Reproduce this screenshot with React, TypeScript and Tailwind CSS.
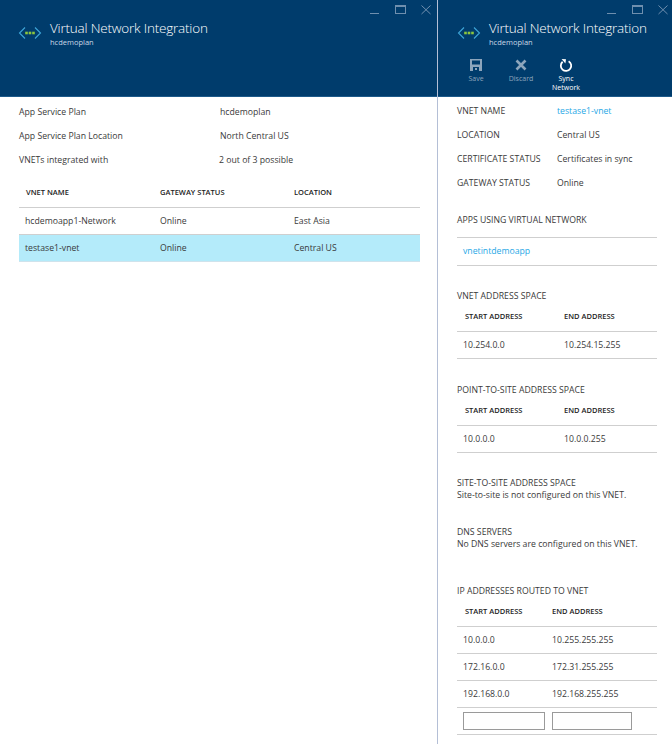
import React from 'react';

function VnetIcon() {
  return (
    <svg width="24" height="14" viewBox="0 0 24 14" className="shrink-0">
      <path d="M7 1.5 L1.5 7 L7 12.5" fill="none" stroke="#3ea5d8" strokeWidth="1.1" />
      <path d="M17 1.5 L22.5 7 L17 12.5" fill="none" stroke="#3ea5d8" strokeWidth="1.1" />
      <rect x="7.2" y="5.7" width="2.6" height="2.6" fill="#8cc63f" />
      <rect x="10.7" y="5.7" width="2.6" height="2.6" fill="#8cc63f" />
      <rect x="14.2" y="5.7" width="2.6" height="2.6" fill="#8cc63f" />
    </svg>
  );
}

function SaveIcon() {
  return (
    <svg width="14" height="14" viewBox="0 0 14 14">
      <path
        fillRule="evenodd"
        d="M1 1 H13 V13 H1 Z M3 2.5 V6.5 H11 V2.5 Z M4 9 V13 H10 V9 Z"
        fill="#8ca5bc"
      />
      <rect x="6" y="10" width="2" height="2" fill="#8ca5bc" />
    </svg>
  );
}

function DiscardIcon() {
  return (
    <svg width="14" height="14" viewBox="0 0 14 14">
      <path d="M2.5 2.5 L11.5 11.5 M11.5 2.5 L2.5 11.5" stroke="#8ca5bc" strokeWidth="2.6" fill="none" />
    </svg>
  );
}

function SyncIcon() {
  return (
    <svg width="14" height="15" viewBox="0 0 14 15">
      <path d="M9.6 3.2 A5.2 5.2 0 1 1 3.6 3.8" stroke="#ffffff" strokeWidth="1.8" fill="none" />
      <path d="M2.6 1 L7 1.2 L6.4 5.4 Z" fill="#ffffff" />
    </svg>
  );
}

function WindowButtons() {
  return (
    <svg width="61" height="14" viewBox="0 0 61 14" className="text-[#6f8fae]">
      <rect x="0" y="11" width="9" height="1" fill="currentColor" />
      <rect x="25.5" y="3.5" width="10" height="8" fill="none" stroke="currentColor" strokeWidth="1" />
      <rect x="25" y="3" width="11" height="2" fill="currentColor" />
      <path d="M51.5 3.5 L60.5 12 M60.5 3.5 L51.5 12" stroke="currentColor" strokeWidth="1" fill="none" />
    </svg>
  );
}

function Title() {
  return (
    <div className="flex items-center gap-[8px]">
      <VnetIcon />
      <div>
        <div className="text-[13.5px] leading-[18px] tracking-[-0.2px] text-white font-light">Virtual Network Integration</div>
        <div className="text-[7.5px] leading-[10px] text-[#c9d8e6] font-medium">hcdemoplan</div>
      </div>
    </div>
  );
}

function InfoRow({ label, value, link, labelWidth }: { label: string; value: string; link?: boolean; labelWidth: string }) {
  return (
    <div className="flex h-6 items-center text-[8.7px]">
      <div className={`${labelWidth} text-[#3a3a3a] whitespace-nowrap`}>{label}</div>
      <div className={link ? 'text-[#1fa8e6]' : 'text-[#3a3a3a]'}>{value}</div>
    </div>
  );
}

function AddressTable({ headCol, col, rows, rowPad }: { headCol: string; col: string; rows: string[][]; rowPad: string }) {
  return (
    <div className="text-[8.7px] text-[#3a3a3a]">
      <div className="flex h-[30px] items-center border-b border-[#cfcfcf] text-[7.5px] font-semibold text-[#222] pl-[8px]">
        <div className={headCol}>START ADDRESS</div>
        <div>END ADDRESS</div>
      </div>
      {rows.map((r) => (
        <div key={r[0]} className={`flex h-[27px] items-center border-b border-[#cfcfcf] pl-[6px] ${rowPad}`}>
          <div className={col}>{r[0]}</div>
          <div>{r[1]}</div>
        </div>
      ))}
    </div>
  );
}

export default function App() {
  return (
    <div
      className="flex w-[672px] h-[744px] overflow-hidden bg-white"
      style={{ fontFamily: '"Open Sans", "Noto Sans", sans-serif' }}
    >
      {/* left blade */}
      <div className="w-[438px] shrink-0 border-r border-[#b4bfd6]">
        <div className="h-[97px] bg-[#003c6c] border-b border-[#1d5a8a] pt-[2px] pr-[6px]">
          <div className="flex justify-end h-[14px]">
            <WindowButtons />
          </div>
          <div className="pl-[18px] pt-[3px]">
            <Title />
          </div>
        </div>
        <div className="pl-[19px] pr-[17px] pt-[4px]">
          <InfoRow labelWidth="w-[201px]" label="App Service Plan" value="hcdemoplan" />
          <InfoRow labelWidth="w-[201px]" label="App Service Plan Location" value="North Central US" />
          <InfoRow labelWidth="w-[200px]" label="VNETs integrated with" value="2 out of 3 possible" />

          <div className="mt-[7px] text-[8.7px] text-[#3a3a3a]">
            <div className="flex h-[28px] items-center border-b border-[#cfcfcf] pb-[2px] text-[7.5px] font-semibold text-[#222] pl-[7px]">
              <div className="w-[134px]">VNET NAME</div>
              <div className="w-[134px]">GATEWAY STATUS</div>
              <div>LOCATION</div>
            </div>
            <div className="flex h-[27px] items-center border-b border-[#cfcfcf] pt-[1px] pl-[6px]">
              <div className="w-[135px]">hcdemoapp1-Network</div>
              <div className="w-[134px]">Online</div>
              <div>East Asia</div>
            </div>
            <div className="flex h-[27px] items-center border-b border-[#cfe3ec] bg-[#b4ebfa] pt-[1px] pl-[6px]">
              <div className="w-[135px]">testase1-vnet</div>
              <div className="w-[134px]">Online</div>
              <div>Central US</div>
            </div>
          </div>
        </div>
      </div>

      {/* right blade */}
      <div className="flex-1 min-w-0">
        <div className="h-[97px] bg-[#003c6c] border-b border-[#1d5a8a] pt-[2px] pr-[4px]">
          <div className="flex justify-end h-[14px]">
            <WindowButtons />
          </div>
          <div className="pl-[19px] pt-[3px]">
            <Title />
          </div>
          <div className="flex pl-[20px] pt-[11px] text-[7px] leading-[9px] text-center">
            <div className="w-[36px] flex flex-col items-center gap-[2px] text-[#8ca5bc]">
              <SaveIcon />
              <span>Save</span>
            </div>
            <div className="w-[54px] flex flex-col items-center gap-[2px] text-[#8ca5bc]">
              <DiscardIcon />
              <span>Discard</span>
            </div>
            <div className="w-[36px] flex flex-col items-center gap-[1px] text-white font-medium">
              <SyncIcon />
              <span>Sync<br />Network</span>
            </div>
          </div>
        </div>
        <div className="pl-[19px] pr-[15px] pt-[3px] text-[8.7px] text-[#3a3a3a]">
          <InfoRow labelWidth="w-[100px]" label="VNET NAME" value="testase1-vnet" link />
          <InfoRow labelWidth="w-[100px]" label="LOCATION" value="Central US" />
          <InfoRow labelWidth="w-[100px]" label="CERTIFICATE STATUS" value="Certificates in sync" />
          <InfoRow labelWidth="w-[100px]" label="GATEWAY STATUS" value="Online" />

          <div className="mt-[18px] h-[24px] border-b border-[#cfcfcf] leading-[12px]">APPS USING VIRTUAL NETWORK</div>
          <div className="h-[28px] flex items-center border-b border-[#cfcfcf] pl-[6px] text-[#1fa8e6]">vnetintdemoapp</div>

          <div className="mt-[24px] leading-[12px]">VNET ADDRESS SPACE</div>
          <AddressTable headCol="w-[99px]" col="w-[101px]" rowPad="pt-[1px]" rows={[['10.254.0.0', '10.254.15.255']]} />

          <div className="mt-[25px] leading-[12px]">POINT-TO-SITE ADDRESS SPACE</div>
          <AddressTable headCol="w-[99px]" col="w-[101px]" rowPad="pt-[1px]" rows={[['10.0.0.0', '10.0.0.255']]} />

          <div className="mt-[24px] leading-[12px]">
            <div>SITE-TO-SITE ADDRESS SPACE</div>
            <div>Site-to-site is not configured on this VNET.</div>
          </div>
          <div className="mt-[25px] leading-[12px]">
            <div>DNS SERVERS</div>
            <div>No DNS servers are configured on this VNET.</div>
          </div>

          <div className="mt-[35px] leading-[12px]">IP ADDRESSES ROUTED TO VNET</div>
          <AddressTable
            headCol="w-[87px]"
            col="w-[89px]"
            rowPad="pt-[2px]"
            rows={[
              ['10.0.0.0', '10.255.255.255'],
              ['172.16.0.0', '172.31.255.255'],
              ['192.168.0.0', '192.168.255.255'],
            ]}
          />
          <div className="flex h-[27px] items-center gap-[7px] border-b border-[#cfcfcf] pl-[6px]">
            <input className="w-[82px] h-[18px] border border-[#9a9a9a] bg-white" />
            <input className="w-[80px] h-[18px] border border-[#9a9a9a] bg-white" />
          </div>
        </div>
      </div>
    </div>
  );
}
